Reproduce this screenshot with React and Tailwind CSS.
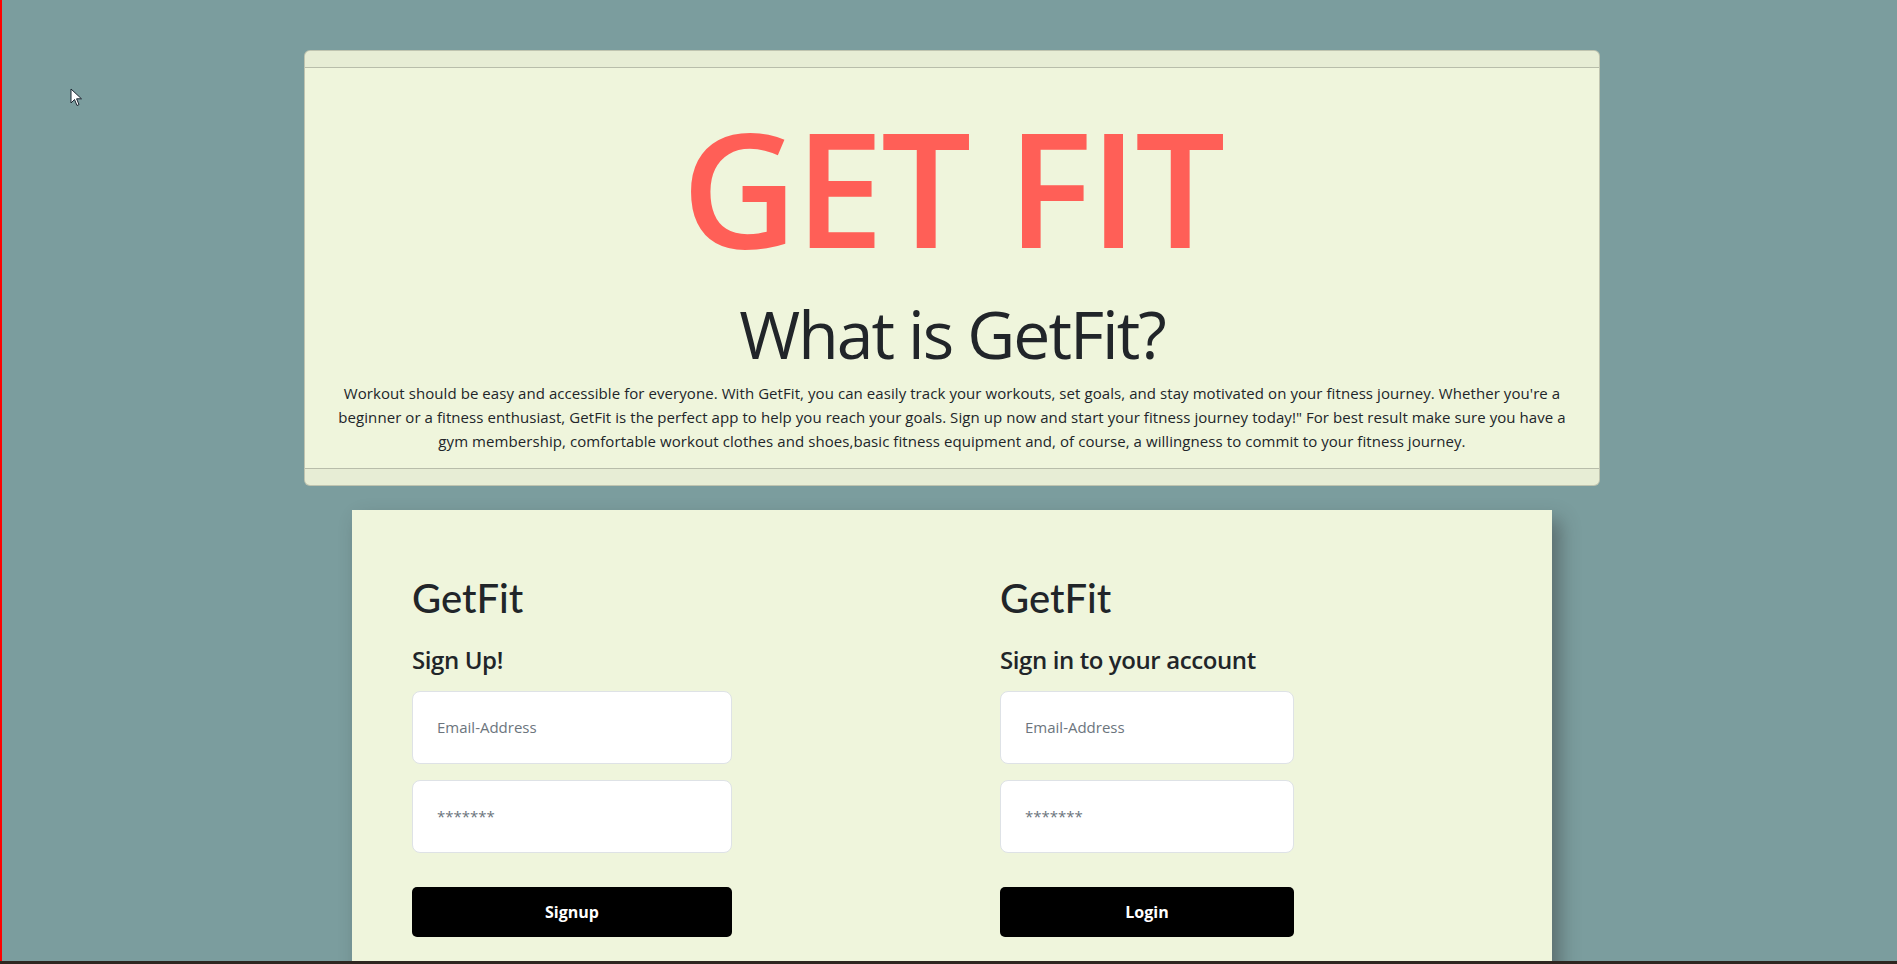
import React from "react";

const lines = [
  "Workout should be easy and accessible for everyone. With GetFit, you can easily track your workouts, set goals, and stay motivated on your fitness journey. Whether you're a",
  "beginner or a fitness enthusiast, GetFit is the perfect app to help you reach your goals. Sign up now and start your fitness journey today!\" For best result make sure you have a",
  "gym membership, comfortable workout clothes and shoes,basic fitness equipment and, of course, a willingness to commit to your fitness journey.",
];

function Cursor() {
  return (
    <svg
      className="absolute left-[70px] top-[88px]"
      width="13"
      height="20"
      viewBox="0 0 13 20"
    >
      <path
        d="M1 1 L1 15 L4.5 11.5 L7 17.5 L9 16.6 L6.6 10.8 L11.5 10.8 Z"
        fill="#fff"
        stroke="#1b2430"
        strokeWidth="1"
        strokeLinejoin="round"
      />
    </svg>
  );
}

function AuthColumn({ title, subtitle, button, inputWidth, className }) {
  return (
    <div className={className}>
      <h1 className="text-[40px] leading-[1.2] font-medium text-[#212529] font-['Lato',sans-serif]">
        {title}
      </h1>
      <h4 className="mt-[24px] text-[24px] leading-[1.2] font-semibold tracking-[-0.4px] text-[#212529]">
        {subtitle}
      </h4>
      <div className={`mt-[16px] flex flex-col gap-[16px] ${inputWidth}`}>
        <input
          type="email"
          placeholder="Email-Address"
          className="h-[73px] w-full rounded-[8px] border border-[#dee2e6] bg-white pl-[24px] text-[15px] text-[#212529] placeholder:text-[#6c757d] outline-none"
        />
        <input
          type="password"
          placeholder="*******"
          className="h-[73px] w-full rounded-[8px] border border-[#dee2e6] bg-white pl-[24px] text-[15px] text-[#212529] placeholder:text-[#6c757d] outline-none"
        />
      </div>
      <button
        className={`mt-[34px] h-[50px] rounded-[5px] bg-black text-[16px] font-bold text-white ${inputWidth}`}
      >
        {button}
      </button>
    </div>
  );
}

export default function App() {
  return (
    <div className="relative flex h-[964px] flex-col overflow-hidden bg-[#7b9d9e] font-['Open_Sans',sans-serif]">
      <div className="flex-1 overflow-hidden border-l-2 border-[#ff0000] pl-[5px]">
        <div className="flex flex-col items-center pt-[50px]">
          <div className="w-[1296px] overflow-hidden rounded-[6px] border border-black/20 bg-[#eff5dc]">
            <div className="h-[17px] border-b border-black/20 bg-black/[0.03]" />
            <div className="px-4 pb-[15px] text-center">
              <h1 className="mt-[38px] text-[160px] leading-none font-semibold tracking-[-3px] text-[#ff5f57]">
                GET FIT
              </h1>
              <h1 className="mt-[28px] text-[66px] leading-[1.2] font-normal tracking-[-2px] text-[#212529]">
                What is GetFit?
              </h1>
              <p className="mt-[8px] text-[15px] leading-[24px] tracking-[0.07px] text-[#212529]">
                {lines.map((l, i) => (
                  <span key={i} className="block whitespace-nowrap">
                    {l}
                  </span>
                ))}
              </p>
            </div>
            <div className="h-[17px] border-t border-black/20 bg-black/[0.03]" />
          </div>

          <div className="mt-[24px] flex w-[1200px] bg-[#eff5dc] pt-[64px] pb-[40px] shadow-[8px_10px_18px_rgba(50,50,50,0.45)]">
            <AuthColumn
              className="w-[648px] pl-[60px]"
              title="GetFit"
              subtitle="Sign Up!"
              button="Signup"
              inputWidth="w-[320px]"
            />
            <AuthColumn
              className="flex-1"
              title="GetFit"
              subtitle="Sign in to your account"
              button="Login"
              inputWidth="w-[294px]"
            />
          </div>
        </div>
      </div>
      <div className="h-[3px] bg-[#2e2620]" />
      <Cursor />
    </div>
  );
}
